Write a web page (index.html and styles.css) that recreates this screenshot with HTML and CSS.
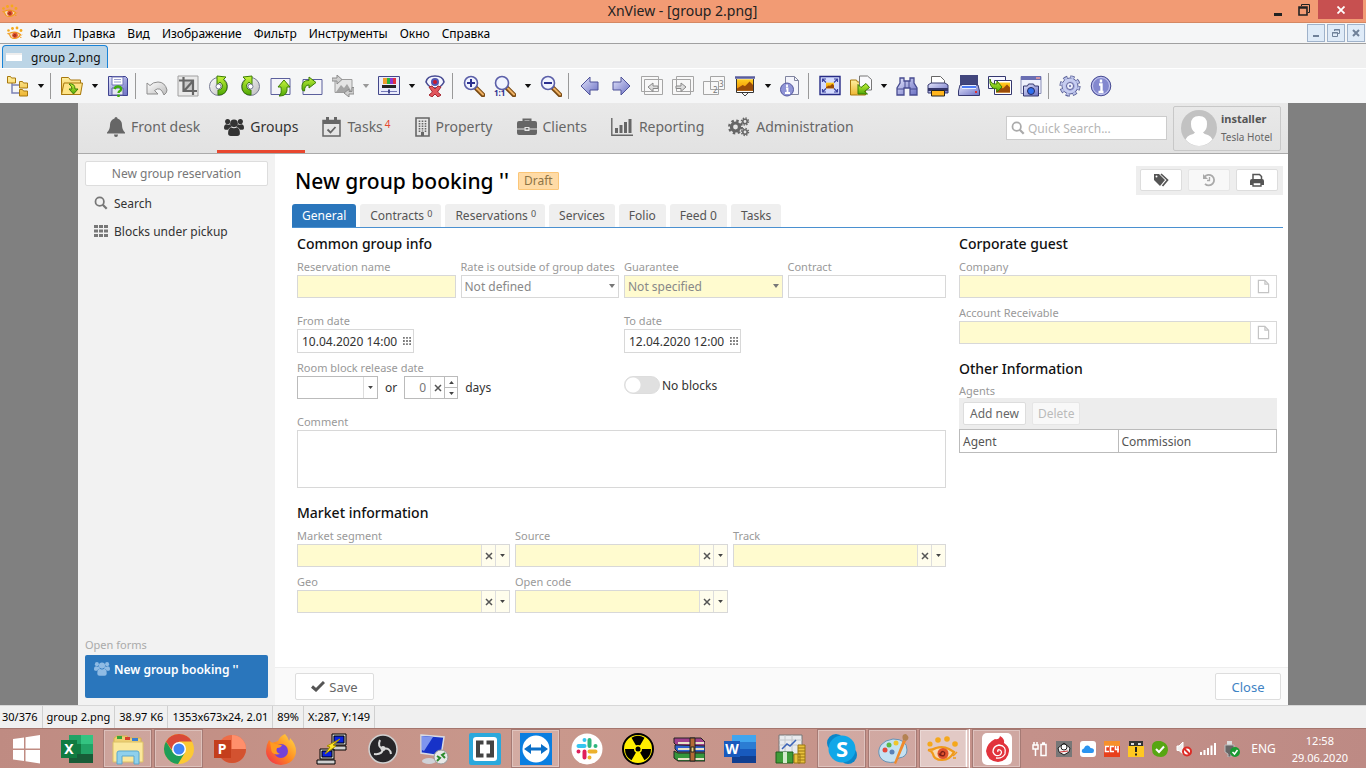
FILE: index.html
```html
<!DOCTYPE html>
<html lang="ru">
<head>
	<meta charset="utf-8">
	<title>XnView - [group 2.png]</title>
	<meta name="viewport" content="width=device-width,initial-scale=1">
	<link rel="stylesheet" href="styles.css">
</head>
<body>
	<!-- shared icons -->
	<svg class="defs" aria-hidden="true">
		<defs>
			<linearGradient id="gBlue" x1="0" y1="0" x2="1" y2="1"><stop offset="0" stop-color="#e4e6fb"/><stop offset="1" stop-color="#6a6fc4"/></linearGradient>
			<linearGradient id="gGreen" x1="0" y1="0" x2="0" y2="1"><stop offset="0" stop-color="#c8f53c"/><stop offset="1" stop-color="#4fa806"/></linearGradient>
			<linearGradient id="gFold" x1="0" y1="0" x2="0" y2="1"><stop offset="0" stop-color="#fff0a0"/><stop offset="1" stop-color="#eeb633"/></linearGradient>
			<linearGradient id="gGrey" x1="0" y1="0" x2="1" y2="1"><stop offset="0" stop-color="#fff"/><stop offset="1" stop-color="#bbb"/></linearGradient>
			<linearGradient id="gSun" x1="0" y1="0" x2="0" y2="1"><stop offset="0" stop-color="#ffcf20"/><stop offset="1" stop-color="#f08a00"/></linearGradient>
			<linearGradient id="gFire" x1="1" y1="0" x2="0" y2="1"><stop offset="0" stop-color="#ffe04a"/><stop offset=".5" stop-color="#ff8a1f"/><stop offset="1" stop-color="#f0264f"/></linearGradient>
		</defs>
		<symbol id="eye" viewBox="0 0 32 28">
			<g fill="#f5a81c"><circle cx="3" cy="9" r="2.600"/><circle cx="11" cy="5" r="2.800"/><circle cx="20" cy="4" r="2.800"/><circle cx="28" cy="9" r="2.800"/></g>
			<path d="M1 15q5 0 8-2 7-2 13 1l5 3q-4 8-12 8-8 0-9-6-1-3-5-4z" fill="#f9d9b0" stroke="#f09a1a" stroke-width="2.200"/>
			<circle cx="16" cy="18.500" r="5.500" fill="#e2542e"/><path d="M14 20q-1-3 2-3.500 3 1 1 4-4 1-5-2" fill="none" stroke="#7d2017" stroke-width="1.300"/>
			<path d="M26 21l4-4M26 23h3" stroke="#f09a1a" stroke-width="1.500"/>
		</symbol>
		<symbol id="people" viewBox="0 0 22 20">
			<circle cx="4" cy="4" r="2.800"/><circle cx="18" cy="4" r="2.800"/><circle cx="11" cy="6" r="4.200"/>
			<path d="M0 11q0-4 3-4 2 1 4 0 .5 2 1.500 3Q5 10.500 4.500 13H1.500Q0 13 0 11zM22 11q0-4-3-4-2 1-4 0-.5 2-1.500 3 3.500.5 4 3h3q1.500 0 1.500-2z"/>
			<path d="M4.500 17q0-6 3.500-6.500 3 1.500 6 0 3.500.5 3.500 6.500 0 3-3 3h-7q-3 0-3-3z"/>
		</symbol>
		<symbol id="loupe" viewBox="0 0 16 16"><circle cx="6.500" cy="6.500" r="4.800" fill="none" stroke="currentColor" stroke-width="2"/><path d="M10 10l4.500 4.500" stroke="currentColor" stroke-width="2.600"/></symbol>
		<symbol id="dots" viewBox="0 0 9 9"><path d="M0 0h2v2H0zM3.500 0h2v2h-2zM7 0h2v2H7zM0 3.500h2v2H0zM3.500 3.500h2v2h-2zM7 3.500h2v2H7zM0 7h2v2H0zM3.500 7h2v2h-2zM7 7h2v2H7z" fill="#777"/></symbol>
		<symbol id="cross" viewBox="0 0 8 8"><path d="M1 1l6 6M7 1L1 7" stroke="#555" stroke-width="1.500"/></symbol>
		<symbol id="down" viewBox="0 0 8 5"><path d="M0 0h8L4 5z" fill="currentColor"/></symbol>
		<symbol id="page" viewBox="0 0 14 16"><path d="M1.500 1.500h7l4 4v9h-11zM8.500 1.500v4h4" fill="none" stroke="#c4c4c4" stroke-width="1.300"/></symbol>
		<symbol id="lens" viewBox="0 0 22 22">
			<path d="M13 13l7 7" stroke="#7a4a12" stroke-width="4.600" stroke-linecap="round"/><path d="M14 13.500l6 6" stroke="#eeb164" stroke-width="2" stroke-linecap="round"/>
			<circle cx="8" cy="8" r="6.500" fill="#f1f4ff" stroke="#5b5fa8" stroke-width="1.600"/>
		</symbol>
		<symbol id="scenic" viewBox="0 0 14 10"><path d="M0 0h14v10H0z" fill="url(#gSun)"/><path d="M0 10V8l5-3 2 1 4-4 3 3v5z" fill="#9a4c08"/></symbol>
	</svg>

	<!-- window frame -->
	<header class="titlebar">
		<svg class="app-eye"><use href="#eye"/></svg>
		<h1 class="title">XnView - [group 2.png]</h1>
		<div class="win-btns">
			<button type="button" class="win-btn" aria-label="Свернуть"><svg width="10" height="12"><path d="M1 10.500h8" stroke="#222" stroke-width="3"/></svg></button>
			<button type="button" class="win-btn" aria-label="Восстановить"><svg width="12" height="12"><path d="M3.500 2V.5h8v8H10" fill="none" stroke="#222"/><path d="M1 3h8v8H1zM1 4h8" fill="none" stroke="#222" stroke-width="1.600"/></svg></button>
			<button type="button" class="win-btn win-close" aria-label="Закрыть"><svg width="8" height="8"><path d="M.5.5l7 7M7.500.5l-7 7" stroke="#fff" stroke-width="1.800"/></svg></button>
		</div>
	</header>

	<nav class="menubar">
		<svg class="app-eye"><use href="#eye"/></svg>
		<a href="#">Файл</a>
		<a href="#">Правка</a>
		<a href="#">Вид</a>
		<a href="#">Изображение</a>
		<a href="#">Фильтр</a>
		<a href="#">Инструменты</a>
		<a href="#">Окно</a>
		<a href="#">Справка</a>
		<div class="mdi-btns">
			<button type="button" aria-label="Свернуть вкладку"><svg width="10" height="10"><path d="M2 8h6" stroke="#6f8199" stroke-width="2"/></svg></button>
			<button type="button" aria-label="Восстановить вкладку"><svg width="10" height="10" fill="none" stroke="#6f8199"><path d="M3.500 3V1.500h5v4H7M3 2h6M1.500 4.500h5v4h-5zM1 5h6"/></svg></button>
			<button type="button" aria-label="Закрыть вкладку"><svg width="10" height="10"><path d="M2 2l6 6M8 2L2 8" stroke="#6f8199" stroke-width="2"/></svg></button>
		</div>
	</nav>

	<div class="filetabs">
		<button type="button" class="filetab"><span class="thumb"></span>group 2.png</button>
	</div>

	<div class="toolbar">
		<button type="button" class="tool" aria-label="Обозреватель"><svg viewBox="0 0 22 22"><path d="M5 7v11h7M5 10h7" fill="none" stroke="#7c82b5" stroke-width="1.500"/><g fill="url(#gFold)" stroke="#a8780e"><path d="M.5 1.500h3l1 1.500h4v5h-8zM12.500 6.500h3l1 1.500h4v5h-8zM12.500 14.500h3l1 1.500h4v5h-8z"/></g></svg></button>
		<button type="button" class="drop" aria-label="Ещё"><svg><use href="#down"/></svg></button>
		<span class="sep"></span>
		<button type="button" class="tool" aria-label="Открыть"><svg viewBox="0 0 22 22"><path d="M.5 19.500v-17h7l2 2.500h10v14.500z" fill="url(#gFold)" stroke="#a8780e"/><path d="M.5 19.500L3 8h18.500l-2 11.500z" fill="#ffe486" stroke="#a8780e"/><path d="M8 9q6-1 6 5h3l-4.500 5L8 14h3q0-3-3-5z" fill="url(#gGreen)" stroke="#3b7d05"/></svg></button>
		<button type="button" class="drop" aria-label="Ещё"><svg><use href="#down"/></svg></button>
		<button type="button" class="tool" aria-label="Сохранить"><svg viewBox="0 0 22 22"><path d="M1.500 1.500h17l2 2v17h-19z" fill="url(#gBlue)" stroke="#3f438f"/><path d="M5 2h11v8H5z" fill="#fff" stroke="#7276b8"/><path d="M7 4.500h7M7 7h7" stroke="#9aa0d0"/><path d="M5 13h11v7H5z" fill="#e4e6f2" stroke="#5a5ea0"/><path d="M7.500 14q1-3 4-2.500 4 1 2 4-2 1-2 2.500M11.500 19.500V22" fill="none" stroke="#3fae0c" stroke-width="2.400"/></svg></button>
		<span class="sep"></span>
		<button type="button" class="tool" aria-label="Отменить"><svg viewBox="0 0 22 22"><path d="M1 8v11h11l-3.500-3.500q6-5 9.500 4.500 3-2 3-5-2-8-9-8-5 0-8 3.500z" fill="url(#gGrey)" stroke="#8d8d8d"/></svg></button>
		<button type="button" class="tool" aria-label="Обрезать"><svg viewBox="0 0 22 22"><path d="M1 1h20v20H1z" fill="#eaeaea" stroke="#a0a0a0"/><path d="M6 6h10v10H6z" fill="#c9c9c9"/><path d="M6.500 2v14H20M2 5.500h14V20M7 16l9-10" fill="none" stroke="#666" stroke-width="2.200"/></svg></button>
		<button type="button" class="tool" aria-label="Повернуть влево"><svg viewBox="0 0 22 22"><circle cx="10.500" cy="11.500" r="9" fill="url(#gGrey)" stroke="#777b93"/><path d="M10 20q9 0 9-9-.5-4-3.500-6.500L18 2 9 1v9l3-3q4 3 2 6-1 2-4 2z" fill="url(#gGreen)" stroke="#3b7d05"/><circle cx="10.500" cy="11.500" r="2.500" fill="#fff" stroke="#777b93"/></svg></button>
		<button type="button" class="tool" aria-label="Повернуть вправо"><svg viewBox="0 0 22 22"><circle cx="11.500" cy="11.500" r="9" fill="url(#gGrey)" stroke="#777b93"/><path d="M12 20q-9 0-9-9 .5-4 3.500-6.500L4 2l9-1v9l-3-3q-4 3-2 6 1 2 4 2z" fill="url(#gGreen)" stroke="#3b7d05"/><circle cx="11.500" cy="11.500" r="2.500" fill="#fff" stroke="#777b93"/></svg></button>
		<button type="button" class="tool" aria-label="Вверх"><svg viewBox="0 0 22 22"><path d="M1 3.500h19v16H1z" fill="#f4f4f8" stroke="#5b5f9c"/><path d="M8 12l6-7 6 7h-3q1 9-7 9H9q3-2 2-9z" fill="url(#gGreen)" stroke="#3b7d05"/></svg></button>
		<button type="button" class="tool" aria-label="Вправо"><svg viewBox="0 0 22 22"><path d="M2 4.500h19v15H2z" fill="#f4f4f8" stroke="#5b5f9c"/><path d="M1 14Q0 5 8 5.500V2l7 5.500-7 5.500v-3Q3.500 10 3.500 16 1 16 1 14z" fill="url(#gGreen)" stroke="#3b7d05"/></svg></button>
		<button type="button" class="tool" aria-label="Преобразовать"><svg viewBox="0 0 22 22"><path d="M3 4.500h17v13H3z" fill="#e4e4e4" stroke="#9c9c9c"/><path d="M4 17l5-7 3 3 3-4 5 8z" fill="#a4a4a4"/><path d="M0 3h5V0l5 4.500L5 9V6H0zM22 19h-5v3l-5-4 5-4v2.500h3v-4h2z" fill="#cfcfcf" stroke="#8c8c8c"/></svg></button>
		<button type="button" class="drop drop-off" aria-label="Ещё"><svg><use href="#down"/></svg></button>
		<button type="button" class="tool" aria-label="Цвета"><svg viewBox="0 0 22 22"><path d="M.5 1.500h21v18H.5z" fill="#e9ebfa" stroke="#43478a"/><path d="M5 3h4v6H5z" fill="#ef9d2c"/><path d="M9 3h3v6H9z" fill="#2cb43c"/><path d="M12 3h3v6h-3z" fill="#8a3ad0"/><path d="M15 3h3v6h-3z" fill="#e03040"/><path d="M4 10h14v3H4z" fill="#222"/><path d="M3 16.500h16" stroke="#7478b8"/><path d="M10 14.500h2v4h-2z" fill="#43478a"/></svg></button>
		<button type="button" class="drop" aria-label="Ещё"><svg><use href="#down"/></svg></button>
		<button type="button" class="tool" aria-label="Красные глаза"><svg viewBox="0 0 22 22"><path d="M2 7Q3 1 11 1t9 6q-3 6-9 6T2 7z" fill="#f5f6ff" stroke="#474b92" stroke-width="1.600"/><circle cx="11" cy="7" r="4" fill="#5257b0"/><circle cx="11" cy="7" r="2" fill="#c9182e"/><path d="M5 12l3-1 3 3 3-3 3 1-3.500 5 3.500 3-3 2-3-3-3 3-3-2 3.500-3z" fill="#e2555c" stroke="#a62832"/></svg></button>
		<span class="sep"></span>
		<button type="button" class="tool" aria-label="Увеличить"><svg viewBox="0 0 22 22"><use href="#lens"/><path d="M4 8h8M8 4v8" stroke="#2c3190" stroke-width="2"/></svg></button>
		<button type="button" class="tool" aria-label="Масштаб 1:1"><svg class="wide" viewBox="0 0 24 24"><svg x="1" y="1" width="22" height="22"><use href="#lens"/></svg><text x="1" y="22" class="ratio">1:1</text></svg></button>
		<button type="button" class="drop" aria-label="Ещё"><svg><use href="#down"/></svg></button>
		<button type="button" class="tool" aria-label="Уменьшить"><svg viewBox="0 0 22 22"><use href="#lens"/><path d="M4 8h8" stroke="#2c3190" stroke-width="2"/></svg></button>
		<span class="sep"></span>
		<button type="button" class="tool" aria-label="Назад"><svg viewBox="0 0 22 22"><path d="M2 11l9-9v5h8v8h-8v5z" fill="url(#gBlue)" stroke="#4f5399"/></svg></button>
		<button type="button" class="tool" aria-label="Вперёд"><svg viewBox="0 0 22 22"><path d="M20 11l-9-9v5H3v8h8v5z" fill="url(#gBlue)" stroke="#4f5399"/></svg></button>
		<button type="button" class="tool" aria-label="Предыдущая страница"><svg viewBox="0 0 22 22" fill="#f8f8f8" stroke="#a5a5a5"><path d="M.5 1.500h17v15H.5zM3.500 4.500h18v15h-18z"/><path d="M7 12l5-4v3h5v2.500h-5v3z" fill="#ddd" stroke="#888"/></svg></button>
		<button type="button" class="tool" aria-label="Следующая страница"><svg viewBox="0 0 22 22" fill="#f8f8f8" stroke="#a5a5a5"><path d="M4.500 1.500h17v15h-17zM.5 4.500h18v15H.5z"/><path d="M14 12L9 8v3H4v2.500h5v3z" fill="#ddd" stroke="#888"/></svg></button>
		<button type="button" class="tool" aria-label="Страницы"><svg viewBox="0 0 22 22"><path d="M7.500 1.500h14v13h-14zM.5 6.500h15v13H.5z" fill="#f8f8f8" stroke="#a5a5a5"/><text x="10" y="18" class="pageno">2</text><text x="16" y="12" class="pageno">3</text></svg></button>
		<button type="button" class="tool" aria-label="Слайд-шоу"><svg viewBox="0 0 22 22"><path d="M8 18l3 3 3-3" fill="none" stroke="#444"/><path d="M1 2.500h20" stroke="#5a5e9e" stroke-width="2.500"/><path d="M2.500 4v13.500h17V4" fill="#fff" stroke="#333"/><svg x="3" y="4" width="16" height="12"><use href="#scenic"/></svg></svg></button>
		<button type="button" class="drop" aria-label="Ещё"><svg><use href="#down"/></svg></button>
		<button type="button" class="tool" aria-label="Свойства"><svg viewBox="0 0 22 22"><path d="M5.500 1.500h9l4 4v14h-13z" fill="#f3f4fb" stroke="#80849f"/><path d="M14.500 1.500v4h4" fill="none" stroke="#80849f"/><circle cx="7" cy="14.500" r="6.500" fill="#8f94d6" stroke="#54589f"/><path d="M7 9.500v2.500M6 13.500h1.500V18M5 18h5" fill="none" stroke="#fff" stroke-width="1.800"/></svg></button>
		<span class="sep"></span>
		<button type="button" class="tool" aria-label="Полный экран"><svg viewBox="0 0 22 22"><path d="M1 1.500h20v18H1z" fill="#d5dcff" stroke="#272c86" stroke-width="1.400"/><path d="M3.500 7V4H7M15 4h3.500v3M18.500 14v3H15M7 17H3.500v-3M4 4.500l3 3M18 4.500l-3 3M18 16.500l-3-3M4 16.500l3-3" fill="none" stroke="#3c43a0" stroke-width="1.200"/><svg x="7" y="7" width="8" height="7"><use href="#scenic"/></svg></svg></button>
		<button type="button" class="tool" aria-label="Копировать в папку"><svg viewBox="0 0 22 22"><path d="M.5 20V5h6l1 2h8v13z" fill="url(#gFold)" stroke="#a8780e"/><path d="M9.500 1h8l4 3.500V15h-12z" fill="#fafafd" stroke="#777"/><path d="M8 19V9.500l3 3 5-4 3.500 4-5 4 3 2.500z" fill="url(#gGreen)" stroke="#3b7d05"/></svg></button>
		<button type="button" class="drop" aria-label="Ещё"><svg><use href="#down"/></svg></button>
		<button type="button" class="tool" aria-label="Найти"><svg viewBox="0 0 22 22"><path d="M4 3h4v3h6V3h4v5l3 5v7h-7v-7H8v7H1v-7l3-5z" fill="url(#gBlue)" stroke="#474b90" stroke-width="1.300"/><path d="M9 6v7M13 6v7M1 14h7M14 14h7" stroke="#474b90"/></svg></button>
		<button type="button" class="tool" aria-label="Печать"><svg viewBox="0 0 22 22"><path d="M4.500 9V1.500h9l4 4V9" fill="#fff" stroke="#666"/><path d="M1 10l3-2h14l3 2v8H1z" fill="url(#gBlue)" stroke="#35386f"/><path d="M1 13h20v3H1z" fill="#34366a"/><path d="M4.500 15.500h13V21h-13z" fill="#ffb51c" stroke="#222"/></svg></button>
		<button type="button" class="tool" aria-label="Сканировать"><svg viewBox="0 0 22 22"><path d="M2 0h18v11H2z" fill="#41457c"/><path d="M2 10h18l1.500 6v4.500H.5V16z" fill="url(#gBlue)" stroke="#35386f"/><path d="M4 10h14v4H4z" fill="#e9efff"/><path d="M4 12h14" stroke="#4d7cf5" stroke-width="2"/><path d="M17 17h2" stroke="#e03030" stroke-width="2"/></svg></button>
		<button type="button" class="tool" aria-label="Конвертировать"><svg class="wide" viewBox="0 0 24 24"><path d="M.5 2.500h17v12H.5z" fill="#f7f7ff" stroke="#35386f"/><path d="M6.500 6.500h17v14h-17z" fill="#fff" stroke="#35386f"/><svg x="8" y="8" width="14" height="11"><use href="#scenic"/></svg><path d="M2 5q1 6 7 5V7l5 6-5 5v-3Q1 15 2 5z" fill="url(#gGreen)" stroke="#3b7d05"/></svg></button>
		<button type="button" class="tool" aria-label="Снимок экрана"><svg viewBox="0 0 22 22"><path d="M1 1.500h20v17H1z" fill="#eef0fb" stroke="#8c90b8"/><path d="M1 1h20v4H1z" fill="#6a6eb2"/><path d="M16 3h4" stroke="#f5a0a0" stroke-width="1.500"/><path d="M3.500 11h4l1-2h5l1 2h4v10h-15z" fill="url(#gBlue)" stroke="#35386f"/><circle cx="11" cy="16" r="3.500" fill="#2f6ff0" stroke="#272a5e"/></svg></button>
		<span class="sep"></span>
		<button type="button" class="tool" aria-label="Настройки"><svg viewBox="0 0 22 22"><circle cx="11" cy="11" r="8.900" fill="none" stroke="#5d6399" stroke-width="3.400" stroke-dasharray="4.200 2.790"/><circle cx="11" cy="11" r="8" fill="url(#gBlue)" stroke="#5d6399"/><circle cx="11" cy="11" r="8.600" fill="none" stroke="#bcc4ea" stroke-width="2.200" stroke-dasharray="3 3.754" stroke-dashoffset="-.5"/><circle cx="11" cy="11" r="6" fill="none" stroke="#c6cdf0" stroke-width="2.600"/><circle cx="11" cy="11" r="3.500" fill="#f2f4ff" stroke="#5d6399"/><circle cx="11" cy="11" r="1.200" fill="#7f85bd"/></svg></button>
		<button type="button" class="tool" aria-label="О программе"><svg viewBox="0 0 22 22"><circle cx="11" cy="11" r="9.800" fill="#8388cf" stroke="#494d94"/><circle cx="11" cy="11" r="8.500" fill="none" stroke="#c9ccf2"/><path d="M11 4.500v3M9 9.500h2.500V17M8.500 17h5" fill="none" stroke="#fff" stroke-width="2.400"/></svg></button>
	</div>

	<!-- opened image -->
	<div class="viewer">
	<div class="app">
		<div class="topnav">
			<nav class="mainmenu">
				<a href="#"><svg width="18" height="20" viewBox="0 0 18 20"><path d="M9 0q1.500 0 1.500 1.500Q15 3 15 8t3 7.500v1H0v-1Q3 13 3 8t4.500-6.500Q7.500 0 9 0zM7 17.500h4Q11 20 9 20t-2-2.500z" fill="currentColor"/></svg>Front desk</a>
				<a href="#" class="on"><svg width="20" height="20" fill="currentColor"><use href="#people"/></svg>Groups</a>
				<a href="#"><svg width="19" height="20" viewBox="0 0 19 20"><path d="M1 3.500h17V19H1z" fill="none" stroke="currentColor" stroke-width="1.500"/><path d="M1 3.500h17V7H1zM4 0h3v5H4zM12 0h3v5h-3z" fill="currentColor"/><path d="M5.500 12.500l3 3 5-5.500" fill="none" stroke="currentColor" stroke-width="1.800"/></svg>Tasks<sup class="hot">4</sup></a>
				<a href="#"><svg width="15" height="20" viewBox="0 0 15 20"><path d="M1 1h13v18H1z" fill="none" stroke="currentColor" stroke-width="1.600"/><path d="M4.500 3.500v12M7.500 3.500v11M10.500 3.500v12" stroke="currentColor" stroke-width="1.600" stroke-dasharray="1.500 1"/><path d="M6 15h3v4H6z" fill="currentColor"/></svg>Property</a>
				<a href="#"><svg width="20" height="18" viewBox="0 0 20 18"><path d="M6.500 4V1.500h7V4" fill="none" stroke="currentColor" stroke-width="2"/><path d="M0 5q0-2 2-2h16q2 0 2 2v5.500h-7.500V9h-5v1.500H0zM0 11.500h7.500V13h5v-1.500H20V15q0 2-2 2H2q-2 0-2-2z" fill="currentColor"/><path d="M8.700 10h2.600v1.500H8.700z" fill="currentColor"/></svg>Clients</a>
				<a href="#"><svg width="22" height="18" viewBox="0 0 22 18"><path d="M.8 0v17.200H22" fill="none" stroke="currentColor" stroke-width="1.400"/><path d="M4 10h3v5H4zM8.500 7h3v8h-3zM13 4h3v11h-3zM17.500 1h3v14h-3z" fill="currentColor"/></svg>Reporting</a>
				<a href="#"><svg width="22" height="20" viewBox="0 0 22 20" fill="none" stroke="currentColor"><circle cx="7.500" cy="10" r="4" stroke-width="3.200"/><circle cx="7.500" cy="10" r="6.300" stroke-width="2.400" stroke-dasharray="2.475 2.475"/><circle cx="17" cy="4.500" r="2.200" stroke-width="1.600"/><circle cx="17" cy="4.500" r="3.500" stroke-width="1.500" stroke-dasharray="1.375 1.375"/><circle cx="17" cy="15" r="2.200" stroke-width="1.600"/><circle cx="17" cy="15" r="3.500" stroke-width="1.500" stroke-dasharray="1.375 1.375"/></svg>Administration</a>
			</nav>
			<label class="quick"><svg width="14" height="14"><use href="#loupe"/></svg><input type="text" placeholder="Quick Search..." aria-label="Quick Search"></label>
			<button type="button" class="user">
				<svg width="36" height="36" viewBox="0 0 36 36"><circle cx="18" cy="18" r="18" fill="#c2c2c2"/><path d="M18 6q8 0 8 8 0 6-4 8.500 1 1.500 5 2.500 3 1 4.500 4.500Q26 36 18 36T4.500 29.500Q6 26 9 25q4-1 5-2.500-4-2.500-4-8.500 0-8 8-8z" fill="#fff"/></svg>
				<span><b>installer</b>Tesla Hotel</span>
			</button>
		</div>

		<div class="columns">
			<aside class="side">
				<button type="button" class="btn btn-new">New group reservation</button>
				<a href="#" class="side-link"><svg width="14" height="14"><use href="#loupe"/></svg>Search</a>
				<a href="#" class="side-link"><svg width="14" height="12" viewBox="0 0 14 12"><path d="M0 0h4v3H0zM5 0h4v3H5zM10 0h4v3h-4zM0 4.500h4v3H0zM5 4.500h4v3H5zM10 4.500h4v3h-4zM0 9h4v3H0zM5 9h4v3H5zM10 9h4v3h-4z" fill="currentColor"/></svg>Blocks under pickup</a>
				<div class="open-forms">
					<p>Open forms</p>
					<a href="#"><svg width="16" height="15" fill="#8fbbe4"><use href="#people"/></svg>New group booking ''</a>
				</div>
			</aside>

			<main class="main">
				<div class="headline">
					<h2>New group booking ''</h2>
					<span class="badge">Draft</span>
					<div class="actions">
						<button type="button" class="btn" aria-label="Tags"><svg width="17" height="14" viewBox="0 0 17 14"><path d="M1 1h5l6 6-5 6-6-6z" fill="#555"/><circle cx="3.500" cy="3.500" r="1" fill="#fff"/><path d="M8 1l6.500 6L9.500 13" fill="none" stroke="#555" stroke-width="1.700"/></svg></button>
						<button type="button" class="btn" aria-label="History" disabled><svg width="14" height="14" viewBox="0 0 14 14"><path d="M2.500 4A5.300 5.300 0 1 1 3 10.800" fill="none" stroke="#aaa" stroke-width="1.800"/><path d="M1 1v5h5z" fill="#aaa"/><path d="M7.500 4v3.500H5" fill="none" stroke="#aaa" stroke-width="1.300"/></svg></button>
						<button type="button" class="btn" aria-label="Print"><svg width="14" height="14" viewBox="0 0 14 14"><path d="M3 7V1.500h6.500L11.500 3.500V7" fill="none" stroke="#555" stroke-width="1.500"/><path d="M0 8q0-2 2-2h10q2 0 2 2v4H0z" fill="#555"/><path d="M3 9.500h8V13H3z" fill="#fff" stroke="#555" stroke-width="1.400"/></svg></button>
					</div>
				</div>
				<nav class="tabs">
					<a href="#" class="on">General</a>
					<a href="#">Contracts <sup>0</sup></a>
					<a href="#">Reservations <sup>0</sup></a>
					<a href="#">Services</a>
					<a href="#">Folio</a>
					<a href="#">Feed 0</a>
					<a href="#">Tasks</a>
				</nav>

				<form class="form">
					<div class="form-left">
						<h3>Common group info</h3>
						<div class="row four">
							<div class="field"><label for="resName">Reservation name</label><input class="box need" id="resName" type="text"></div>
							<div class="field"><label for="rate">Rate is outside of group dates</label><div class="pick"><select class="box" id="rate"><option>Not defined</option></select></div></div>
							<div class="field"><label for="guar">Guarantee</label><div class="pick"><select class="box need" id="guar"><option>Not specified</option></select></div></div>
							<div class="field"><label for="contract">Contract</label><input class="box" id="contract" type="text"></div>
						</div>
						<div class="row two gap-top">
							<div class="field"><label for="from">From date</label><div class="box date"><input id="from" type="text" value="10.04.2020 14:00"><svg width="8" height="8"><use href="#dots"/></svg></div></div>
							<div class="field"><label for="to">To date</label><div class="box date"><input id="to" type="text" value="12.04.2020 12:00"><svg width="8" height="8"><use href="#dots"/></svg></div></div>
						</div>
						<div class="row two">
							<div class="field">
								<label for="release">Room block release date</label>
								<div class="release">
									<div class="box combo rel-date"><input id="release" type="text"><button type="button" aria-label="Open"><svg class="arr"><use href="#down"/></svg></button></div>
									<span>or</span>
									<div class="box combo rel-days"><input id="days" type="text" value="0" aria-label="days"><button type="button" aria-label="Clear"><svg class="x"><use href="#cross"/></svg></button><div class="spin"><button type="button" aria-label="More"><svg class="arr up"><use href="#down"/></svg></button><button type="button" aria-label="Less"><svg class="arr"><use href="#down"/></svg></button></div></div>
									<span>days</span>
								</div>
							</div>
							<label class="switch"><input type="checkbox">No blocks</label>
						</div>
						<div class="field gap-top"><label for="comment">Comment</label><textarea class="box" id="comment"></textarea></div>

						<h3 class="gap-top">Market information</h3>
						<div class="row three">
							<div class="field"><label for="segment">Market segment</label><div class="box need combo"><input id="segment" type="text"><button type="button" aria-label="Clear"><svg class="x"><use href="#cross"/></svg></button><button type="button" aria-label="Open"><svg class="arr"><use href="#down"/></svg></button></div></div>
							<div class="field"><label for="source">Source</label><div class="box need combo"><input id="source" type="text"><button type="button" aria-label="Clear"><svg class="x"><use href="#cross"/></svg></button><button type="button" aria-label="Open"><svg class="arr"><use href="#down"/></svg></button></div></div>
							<div class="field"><label for="track">Track</label><div class="box need combo"><input id="track" type="text"><button type="button" aria-label="Clear"><svg class="x"><use href="#cross"/></svg></button><button type="button" aria-label="Open"><svg class="arr"><use href="#down"/></svg></button></div></div>
							<div class="field"><label for="geo">Geo</label><div class="box need combo"><input id="geo" type="text"><button type="button" aria-label="Clear"><svg class="x"><use href="#cross"/></svg></button><button type="button" aria-label="Open"><svg class="arr"><use href="#down"/></svg></button></div></div>
							<div class="field"><label for="code">Open code</label><div class="box need combo"><input id="code" type="text"><button type="button" aria-label="Clear"><svg class="x"><use href="#cross"/></svg></button><button type="button" aria-label="Open"><svg class="arr"><use href="#down"/></svg></button></div></div>
						</div>
					</div>

					<div class="form-right">
						<h3>Corporate guest</h3>
						<div class="row">
							<div class="field"><label for="company">Company</label><div class="box need combo with-page"><input id="company" type="text"><button type="button" aria-label="New company"><svg width="13" height="15"><use href="#page"/></svg></button></div></div>
							<div class="field"><label for="account">Account Receivable</label><div class="box need combo with-page"><input id="account" type="text"><button type="button" aria-label="New account"><svg width="13" height="15"><use href="#page"/></svg></button></div></div>
						</div>
						<h3 class="gap-top">Other Information</h3>
						<p class="caption">Agents</p>
						<div class="agents-bar">
							<button type="button" class="btn">Add new</button>
							<button type="button" class="btn" disabled>Delete</button>
						</div>
						<table class="agents">
							<thead><tr><th>Agent</th><th>Commission</th></tr></thead>
						</table>
					</div>
				</form>

				<div class="footer">
					<button type="button" class="btn btn-save"><svg width="14" height="11" viewBox="0 0 14 11"><path d="M1 5.500l4 3.500 8-8" fill="none" stroke="#555" stroke-width="3"/></svg>Save</button>
					<button type="button" class="btn btn-close">Close</button>
				</div>
			</main>
		</div>
	</div>
	</div>

	<div class="status">
		<span>30/376</span>
		<span>group 2.png</span>
		<span>38.97 K6</span>
		<span>1353x673x24, 2.01</span>
		<span>89%</span>
		<span>X:287, Y:149</span>
	</div>

	<!-- windows taskbar -->
	<footer class="taskbar">
		<button type="button" class="task" aria-label="Пуск"><svg viewBox="0 0 32 32"><path d="M3 6l11-1.500v11H3zM15.500 4.300L30 2v13.500H15.500zM3 17h11v11L3 26.500zM15.500 17H30v13.500l-14.500-2.300z" fill="#fff"/></svg></button>
		<button type="button" class="task" aria-label="Excel"><svg viewBox="0 0 32 32"><path d="M8 2h24v28H8z" fill="#21a366"/><path d="M20 2h12v9H20z" fill="#33c481"/><path d="M8 11h12v10H8z" fill="#107c41"/><path d="M8 21h24v9H8z" fill="#185c37"/><path d="M0 7h16v18H0z" fill="#107c41"/><text x="8" y="21" class="logo">X</text></svg></button>
		<button type="button" class="task run" aria-label="Проводник"><svg viewBox="0 0 32 32"><path d="M2 28V5l3-2h10l2 2h12v23z" fill="#eecf72" stroke="#d3b252"/><path d="M5 3h5v3H5z" fill="#3aa63a"/><path d="M13 4h5v3h-5z" fill="#d8402c"/><path d="M20 5h6v3h-6z" fill="#3c7fd0"/><path d="M1 9h30v20H1z" fill="#fbe79b" stroke="#dcc067"/><path d="M5 31V20q0-2 2-2h18q2 0 2 2v11h-5v-8H10v8z" fill="#8fd0ec" stroke="#5aa7cd"/></svg></button>
		<button type="button" class="task run" aria-label="Chrome"><svg viewBox="0 0 32 32"><circle cx="16" cy="16" r="15" fill="#fcc934"/><path d="M3 8.500A15 15 0 0 1 29 8.500H16L10.500 19z" fill="#d94a38"/><path d="M3 8.500A15 15 0 0 0 15 31l7-11.500H10z" fill="#1f9d58"/><circle cx="16" cy="16" r="7" fill="#fff"/><circle cx="16" cy="16" r="5.500" fill="#4285f4"/></svg></button>
		<button type="button" class="task" aria-label="PowerPoint"><svg viewBox="0 0 32 32"><circle cx="18" cy="16" r="14" fill="#ed6c47"/><path d="M18 2a14 14 0 0 1 14 14H18z" fill="#ff8f6b"/><path d="M4 16h28a14 14 0 0 1-28 0z" fill="#d35230"/><path d="M0 7h17v18H0z" fill="#c43e1c"/><text x="8" y="21" class="logo">P</text></svg></button>
		<button type="button" class="task" aria-label="Firefox"><svg viewBox="0 0 32 32"><path d="M20 1q3 3 4 7 1-1 1-3 6 6 6 13a15 14 0 0 1-30 0Q1 12 4 7l3 3 6-2q2-5 7-7z" fill="url(#gFire)"/><circle cx="16" cy="18" r="7" fill="#7542d8"/><path d="M5 9q4 1 6 2l6 1q-1 3-5 3-2 4 3 6-9 2-9-6z" fill="#ff9a20"/></svg></button>
		<button type="button" class="task" aria-label="PuTTY"><svg viewBox="0 0 32 32" stroke="#000"><path d="M16 1h14v11H16zM14 13h16v4H14zM4 16h14v10H4zM1 27h18v4H1z" fill="#cfcfcf"/><path d="M18 3h10v7H18zM6 18h10v6H6z" fill="#0a22e0"/><path d="M24 6l-7 6 3 1-11 8 5-7-3-1z" fill="#ffe62a" stroke="#a88f00"/></svg></button>
		<button type="button" class="task" aria-label="OBS"><svg viewBox="0 0 32 32"><circle cx="16" cy="16" r="14" fill="#272629" stroke="#d0d0d0" stroke-width="1.500"/><g fill="none" stroke="#d8d8d8" stroke-width="2"><path d="M16 16q-6-2-3-9"/><path d="M16 16q-1 6-9 5"/><path d="M16 16q7-2 8 5"/></g><circle cx="16" cy="15.500" r="2.500" fill="#d8d8d8"/></svg></button>
		<button type="button" class="task" aria-label="Удалённый рабочий стол"><svg viewBox="0 0 32 32"><path d="M3 2l23 2-3 19-20-3z" fill="#1732c8" stroke="#d8dbe4" stroke-width="1.500"/><path d="M4 3l11 1-9 14-2-1z" fill="#7f95ee"/><ellipse cx="11" cy="28" rx="7" ry="3" fill="#cfd2d8"/><circle cx="23" cy="24" r="7" fill="#e8e8e8" stroke="#999"/><path d="M19 23l3 2-3 3M27 20l-3 2 3 3" fill="none" stroke="#2b8a2b" stroke-width="2"/></svg></button>
		<button type="button" class="task" aria-label="Brackets"><svg viewBox="0 0 32 32"><rect width="32" height="32" rx="2" fill="#2aa8dc"/><rect x="4" y="4" width="24" height="24" rx="3" fill="#fff"/><path d="M14.500 9.500H9v13h5.500M17.500 9.500H23v13h-5.500" fill="none" stroke="#444" stroke-width="4"/></svg></button>
		<button type="button" class="task run" aria-label="TeamViewer"><svg viewBox="0 0 32 32"><path d="M0 0h32v32H0z" fill="#0a7ee0"/><circle cx="16" cy="16" r="13.500" fill="#fff"/><path d="M4 16l7-5v3.500h10V11l7 5-7 5v-3.500H11V21z" fill="#0a6fc8"/></svg></button>
		<button type="button" class="task" aria-label="Slack"><svg viewBox="0 0 32 32"><circle cx="16" cy="16" r="15.500" fill="#fff"/><g stroke-width="4" stroke-linecap="round"><path d="M13.500 7v0M7.500 13h6" stroke="#36c5f0" fill="none"/><path d="M18.500 7v6M24.500 13v0" stroke="#2eb67d" fill="none"/><path d="M7.500 18.500v0M13.500 18.500v6" stroke="#e01e5a" fill="none"/><path d="M18.500 18.500h6M18.500 24.500v0" stroke="#ecb22e" fill="none"/></g></svg></button>
		<button type="button" class="task" aria-label="Radiation"><svg viewBox="0 0 32 32"><circle cx="16" cy="16" r="15" fill="#ffee00" stroke="#000" stroke-width="2"/><path d="M16 16L9.500 4.700a13 13 0 0 1 13 0zM16 16h13a13 13 0 0 1-6.500 11.300zM16 16H3a13 13 0 0 0 6.500 11.300z" fill="#000"/><circle cx="16" cy="16" r="4" fill="#ffee00"/><circle cx="16" cy="16" r="2.500" fill="#000"/></svg></button>
		<button type="button" class="task" aria-label="WinRAR"><svg viewBox="0 0 32 32" stroke="#222"><path d="M1 5h27l4 4v5H5l-4-4z" fill="#a0418c"/><path d="M2 12h3l27 1v6H5l-3-3z" fill="#2f62cf"/><path d="M1 18l4 2h27v8H5l-4-3z" fill="#35963b"/><path d="M5 10h26M5 16h26M5 26h26" stroke="#e8e2c8" stroke-width="2"/><path d="M17 5h5v23h-5z" fill="#b46b35"/><path d="M18 14h3v5h-3z" fill="#eed27c"/></svg></button>
		<button type="button" class="task" aria-label="Word"><svg viewBox="0 0 32 32"><path d="M8 2h24v8H8z" fill="#41a5ee"/><path d="M8 9h24v7H8z" fill="#2b7cd3"/><path d="M8 16h24v7H8z" fill="#185abd"/><path d="M8 23h24v7H8z" fill="#103f91"/><path d="M0 8h16v16H0z" fill="#185abd"/><text x="8" y="21" class="logo">W</text></svg></button>
		<button type="button" class="task" aria-label="Финансы"><svg viewBox="0 0 32 32"><path d="M4 2h23v20H4z" fill="#e9ebee" stroke="#777"/><path d="M4 7h23M4 12h23M10 2v20M17 2v20" stroke="#c4c8cc"/><path d="M7 16l5-5 3 2 6-6" fill="none" stroke="#3c64b8" stroke-width="1.500"/><path d="M1 19h17v11H1z" fill="#3f9c38" stroke="#1f5f1c"/><path d="M8 19h4v11H8z" fill="#d4ebcc"/><path d="M23 12h7v18h-7zM19 21h6v9h-6z" fill="#eac23c" stroke="#9a7712"/><path d="M23 15h7M23 18h7M23 21h7M23 24h7M23 27h7" stroke="#9a7712"/></svg></button>
		<button type="button" class="task run" aria-label="Skype"><svg viewBox="0 0 32 32"><circle cx="10" cy="10" r="9" fill="#0b86c8"/><circle cx="22" cy="22" r="9" fill="#0b86c8"/><circle cx="16" cy="16" r="13.500" fill="#10a7e8"/><text x="16" y="24" class="logo logo-s">S</text></svg></button>
		<button type="button" class="task run" aria-label="Paint"><svg viewBox="0 0 32 32"><path d="M16 6q14 0 14 11 0 7-8 8-3 1-3 4-12 2-16-5-3-6 1-12 4-5 12-6z" fill="#c5e2f2" stroke="#6793b5"/><circle cx="8" cy="17" r="2.500" fill="#e24a3b"/><circle cx="12" cy="12" r="2.500" fill="#5cb848"/><circle cx="19" cy="10" r="2.500" fill="#efc62c"/><circle cx="15" cy="19" r="2.500" fill="#5a82b8"/><path d="M26 7l3 1-10 23-2-1z" fill="#ef8a2c"/><path d="M26 7q-2-6 3-6 5 4 0 7z" fill="#b48252"/></svg></button>
		<button type="button" class="task run active" aria-label="XnView"><svg viewBox="0 0 32 28"><use href="#eye"/></svg></button>
		<button type="button" class="task run" aria-label="Nautilus"><svg viewBox="0 0 32 32"><rect x="1" width="30" height="32" rx="5" fill="#fff"/><path d="M14 6q4 1 5-3 5 3 4 7 5 3 5 8-1 10-11 11Q6 28 5 18q1-8 9-12z" fill="#e2333c"/><path d="M17 19q-1-3 2-2 3 2 0 5-5 2-7-3 0-6 6-7 8 1 6 9-3 5-9 4" fill="none" stroke="#fff" stroke-width="1.300"/></svg></button>

		<div class="tray">
			<svg viewBox="0 0 16 16"><path d="M2 1v3M5 1v3M1 4h5v4H1zM3.500 8v7M9 3.500h5v11H9zM10 2h3" fill="none" stroke="#fff" stroke-width="1.500"/></svg>
			<svg viewBox="0 0 16 16"><path d="M0 0h16v16H0z" fill="#777"/><path d="M2 7l6-5 6 5-1 4-5 3-5-3z" fill="#f2f2f2" stroke="#222"/><circle cx="8" cy="6" r="3" fill="#fff" stroke="#222"/><path d="M4 11l8-1" stroke="#c33"/></svg>
			<svg viewBox="0 0 16 16"><rect width="16" height="16" rx="3" fill="#fff"/><path d="M4 12q-3-.5-2-3 .5-1.500 2-1.500Q5 4 8 4.500q2 .5 2.500 2.500Q14 7 14 9.500T12 12z" fill="#2a94f0"/></svg>
			<svg viewBox="0 0 16 16"><path d="M0 0h16v16H0z" fill="#e8401c"/><path d="M0 0h16v5H0z" fill="#f6902c"/><path d="M5 5.500H1.500v5H5M10 5.500H6.500v5H10M11.500 5v3.500H15M14 5v6.500" fill="none" stroke="#fff" stroke-width="1.600"/></svg>
			<svg viewBox="0 0 16 16"><path d="M1 0h14v5H1z" fill="#333"/><path d="M3 3h3M10 3h3" stroke="#ddd" stroke-width="2"/><path d="M0 5h16v11H0z" fill="#ffc821"/><path d="M8 6v5M8 12.500v2" stroke="#222" stroke-width="2"/></svg>
			<svg viewBox="0 0 16 16"><path d="M5 0q4-.5 6 1 5 2 5 8-1 7-7 7-9 0-9-8-1-7 5-8z" fill="#57a612"/><path d="M4 8l3 3 5-5.500" fill="none" stroke="#fff" stroke-width="2"/></svg>
			<svg viewBox="0 0 16 16"><path d="M1 5h2l4-4v12L3 9.500H1z" fill="#eee" stroke="#fff"/><circle cx="11" cy="10.500" r="4" fill="#fff" stroke="#dc2c26" stroke-width="2"/><path d="M8 7.500l6 6" stroke="#dc2c26" stroke-width="2"/></svg>
			<svg viewBox="0 0 16 16" fill="#fff"><path d="M0 11h2v3H0zM3.500 9h2v5h-2zM7 7h2v7H7zM10.500 4.500h2V14h-2zM14 2h2v12h-2z"/></svg>
			<svg viewBox="0 0 16 16"><path d="M3 0h5v4H3z" fill="#ddd"/><path d="M1 4h9v7l-3 2v3H4v-3l-3-2z" fill="#666" stroke="#bbb"/><circle cx="11" cy="11" r="5" fill="#1a9a32"/><path d="M8.500 11l2 2 3-4" fill="none" stroke="#fff" stroke-width="1.500"/></svg>
		</div>
		<span class="lang">ENG</span>
		<div class="clock"><time>12:58</time><time>29.06.2020</time></div>
	</footer>
</body>
</html>
```

FILE: styles.css
```css
*{margin: 0;padding: 0;box-sizing: border-box;}
html,body{width: 100%;height: 100%}
body{display: flex;flex-direction: column;overflow: hidden;background-color: #f0f0f0;color: #111;font-family: "Noto Sans","Open Sans",sans-serif;font-size: 12px;}
a{color: inherit;text-decoration: none;}
button,input,select,textarea{font: inherit;color: inherit;}
button{border: 0;background: none;}
svg{display: block;flex: none;}
.defs{position: absolute;width: 0;height: 0}

/* window frame */
.titlebar{display: flex;align-items: flex-start;height: 23px;flex: none;padding-left: 2px;background-color: #f29b74;border-bottom: 1px solid #d58863;}
.app-eye{width: 16px;height: 14px;align-self: center;}
.title{flex: 1;padding-left: 82px;text-align: center;font-size: 14px;font-weight: 400;line-height: 22px;color: #222}
.win-btns{display: flex;}
.win-btn{display: flex;width: 26px;height: 19px;align-items: center;justify-content: center;}
.win-close{width: 45px;margin: 0 3px 0 1px;background-color: #c75050}

.menubar{display: flex;align-items: center;height: 21px;flex: none;padding: 0 1px 0 7px;background-color: #f5f6f7;border-bottom: 1px solid #a0a0a0;}
.menubar a{margin-right: 12px;color: #000}
.menubar .app-eye{margin-right: 7px;}
.mdi-btns{display: flex;gap: 2px;margin-left: auto;}
.mdi-btns button{display: flex;width: 18px;height: 18px;align-items: center;justify-content: center;border: 1px solid #9fb2ca;background-color: #dfebf8}

.filetabs{display: flex;align-items: flex-end;height: 25px;flex: none;padding-left: 2px;border-bottom: 1px solid #fff;}
.filetab{display: flex;align-items: center;gap: 9px;height: 23px;padding: 0 6px 0 3px;border: 1px solid #1883d7;border-bottom: 0;border-radius: 4px 4px 0 0;background-color: #bcd5e6}
.thumb{width: 16px;height: 8px;border-top: 2px solid #eee;background-color: #fff}

.toolbar{display: flex;align-items: center;height: 34px;flex: none;padding-left: 2px;background-color: #f5f6f7}
.tool{display: flex;width: 31px;height: 32px;align-items: center;justify-content: center;}
.tool>svg{width: 22px;height: 22px}
.tool>.wide{width: 24px;height: 24px}
.drop{display: flex;width: 15px;height: 32px;align-items: center;justify-content: center;}
.drop svg{width: 8px;height: 4px}
.drop-off{color: #999}
.sep{width: 8px;height: 26px;border-left: 1px solid #999;margin-left: 2px;margin-right: -2px;}
.ratio{font-size: 8px;font-weight: 700;fill: #2c3190}
.pageno{font-size: 8px;fill: #777}

/* opened image */
.viewer{display: flex;flex: 1;min-height: 0;padding: 0 78px;background-color: #808080}
.app{display: flex;flex: 1;flex-direction: column;min-width: 0;background-color: #fff;color: #333}
.topnav{display: flex;align-items: center;height: 51px;flex: none;padding: 0 7px 0 22px;background-image: linear-gradient(#e9e9e9,#e2e2e2);border-bottom: 1px solid #aaa;}
.mainmenu{display: flex;gap: 10px;height: 50px}
.mainmenu a{display: flex;align-items: center;gap: 6px;padding: 0 7px;border-bottom: 3px solid transparent;font-size: 14px;color: #666}
.mainmenu .on{border-bottom-color: #e8472f;color: #333}
.mainmenu sup{margin: -6px 0 0 -4px;font-size: 10px;}
.hot{color: #e8472f}
.quick{display: flex;align-items: center;gap: 3px;width: 161px;height: 24px;margin-left: auto;padding-left: 4px;border: 1px solid #ccc;background-color: #fff;color: #aaa}
.quick input{width: 100%;min-width: 0;border: 0;outline: 0;background: none;}
.quick input::placeholder{color: #b5b5b5}
.user{display: flex;align-items: center;gap: 4px;width: 108px;height: 45px;margin-left: 6px;padding-left: 7px;border: 1px solid #c8c8c8;border-radius: 2px;text-align: left;font-size: 10px;line-height: 18px;color: #666}
.user b{display: block;font-size: 11px;color: #555}

.columns{display: flex;flex: 1;min-height: 0;}
.side{display: flex;flex-direction: column;width: 197px;flex: none;padding: 7px 7px 7px 7px;background-color: #f2f2f2}
.btn{display: flex;align-items: center;justify-content: center;border: 1px solid #ddd;border-radius: 2px;background-color: #fff;color: #666}
.btn:disabled{background-color: #f8f8f8;border-color: #e6e6e6;color: #bbb}
.btn-new{height: 25px;margin-bottom: 4px;color: #777}
.side-link{display: flex;align-items: center;gap: 6px;height: 28px;padding: 0 0 2px 9px;}
.side-link svg{color: #777}
.open-forms{margin-top: auto;}
.open-forms p{line-height: 20px;font-size: 11px;color: #aaa}
.open-forms a{display: flex;gap: 4px;height: 43px;padding: 6px 9px;border-radius: 2px;background-color: #2a76bc;color: #fff;font-weight: 600;}

.main{display: flex;flex: 1;flex-direction: column;min-width: 0;}
.headline{display: flex;align-items: center;height: 50px;flex: none;padding: 3px 5px 0 20px;}
.headline h2{font-size: 21px;font-weight: 500;color: #000}
.badge{margin-left: 9px;padding: 0 5px;border: 1px solid #fbc678;border-radius: 1px;background-color: #ffdba6;line-height: 16px;color: #8d7446}
.actions{display: flex;gap: 6px;margin-left: auto;padding: 3px 5px 4px 4px;background-color: #eee}
.actions .btn{width: 42px;height: 22px}
.tabs{display: flex;gap: 4px;height: 24px;flex: none;margin: 0 5px 0 17px;border-bottom: 1px solid #4a90d0;}
.tabs a{display: flex;align-items: center;padding: 0 10px;border-radius: 3px 3px 0 0;background-color: #efefef;color: #555;white-space: pre;}
.tabs .on{background-color: #2a76bc;color: #fff}
.tabs sup{margin: -4px -1px 0 0;font-size: 9px;line-height: 1;}

.form{display: grid;grid-template-columns: 649fr 318fr;gap: 13px;flex: 1;min-height: 0;padding: 5px 11px 0 22px;}
.form h3{margin-bottom: 3px;font-size: 14px;font-weight: 500;line-height: 22px;color: #111}
.row{display: grid;gap: 6px 5px;margin-bottom: 6px;}
.four{grid-template-columns: repeat(4,1fr);}
.three{grid-template-columns: repeat(3,1fr);}
.two{grid-template-columns: repeat(2,1fr);}
.row:has(+ .gap-top){margin-bottom: 0}
.gap-top{margin-top: 14px;}
.field{min-width: 0}
.field>label,.caption{display: block;font-size: 11px;line-height: 17px;color: #999;white-space: nowrap;}
.caption{line-height: 15px;}
.box{display: block;width: 100%;height: 23px;padding: 0 3px;border: 1px solid #d8d8d8;border-radius: 0;outline: 0;background-color: #fff;appearance: none;}
.need{background-color: #fffbcf}
textarea.box{height: 58px;resize: none;}
select.box{color: #888}
.pick{position: relative;}
.pick::after{content: "";position: absolute;top: 9px;right: 4px;border: 3px solid transparent;border-top: 4px solid #777;border-bottom: 0}
.box.date{display: flex;align-items: center;width: 117px;height: 24px;padding: 0 2px 0 4px;}
.date input,.combo input{flex: 1;width: 100%;min-width: 0;border: 0;outline: 0;background: none;}
.combo{display: flex;padding: 0}
.combo button{display: flex;width: 14px;flex: none;align-items: center;justify-content: center;border-left: 1px solid #ddd;background-color: rgba(255,255,255,.6)}
.x{width: 8px;height: 8px}
.arr{width: 5px;height: 3px;color: #444}
.up{transform: rotate(180deg);}
.combo.with-page button{width: 26px;background-color: #fff}
.release{display: flex;align-items: center;gap: 7px;}
.rel-date{width: 81px;border-color: #bbb}
.rel-days{width: 54px;border-color: #bbb}
.rel-days input{text-align: right;padding-right: 4px;color: #777}
.spin{display: flex;flex-direction: column;width: 13px;flex: none;border-left: 1px solid #bbb;}
.spin button{width: auto;flex: 1;border-left: 0}
.spin button+button{border-top: 1px solid #bbb;}
.switch{display: flex;align-items: center;gap: 2px;padding-top: 12px;}
.switch input{width: 36px;height: 18px;border: 1px solid #ddd;border-radius: 9px;appearance: none;background: radial-gradient(circle at 8px 8px,#fff 7px,#e0e0e0 8px);}
.agents-bar{display: flex;gap: 6px;padding: 4px;background-color: #ededed}
.agents-bar .btn{height: 23px;padding: 0 6px;}
.agents-bar .btn:disabled{padding: 0 5px;}
.agents{width: 100%;table-layout: fixed;border-collapse: collapse;}
.agents th{height: 23px;padding: 0 3px;border: 1px solid #bbb;text-align: left;font-weight: 400;color: #555}
.footer{display: flex;align-items: center;justify-content: space-between;height: 38px;flex: none;padding: 0 7px 0 20px;border-top: 1px solid #eee;background-color: #fafafa}
.footer .btn{height: 27px;gap: 4px;font-size: 13px;}
.btn-save{width: 79px}
.footer .btn-close{width: 66px;color: #3f83c4}

.status{display: flex;height: 23px;flex: none;border-top: 1px solid #d7d7d7;font-size: 11px;line-height: 22px;color: #000}
.status span{padding: 0 4px;border-right: 1px solid #d0d0d0;white-space: nowrap;}
.status span:first-child{padding-left: 2px}

/* taskbar */
.taskbar{display: flex;align-items: center;height: 40px;flex: none;background-image: linear-gradient(100deg,#bf8b82,#c9988c 40%,#c4918a 75%,#bd8a84);border-top: 1px solid #a5766e;}
.task{display: flex;width: 49px;height: 39px;flex: none;margin: 0 1px;align-items: center;justify-content: center;border: 1px solid transparent;}
.task>svg{width: 32px;height: 32px}
.run{border-color: #a57a74;background-color: rgba(255,255,255,.2);box-shadow: inset 0 0 0 1px rgba(255,255,255,.3);}
.active{width: 51px;background-color: rgba(255,255,255,.5);border-right: 4px double #fff;}
.logo{font-size: 14px;font-weight: 700;text-anchor: middle;fill: #fff}
.logo-s{font-size: 22px}
.tray{display: flex;gap: 8px;margin: 0 auto 0 10px;}
.tray svg{width: 16px;height: 16px}
.lang{margin-right: 16px;color: #fff}
.clock{display: flex;flex-direction: column;align-items: center;margin-right: 18px;font-size: 11px;line-height: 17px;color: #fff}
```
